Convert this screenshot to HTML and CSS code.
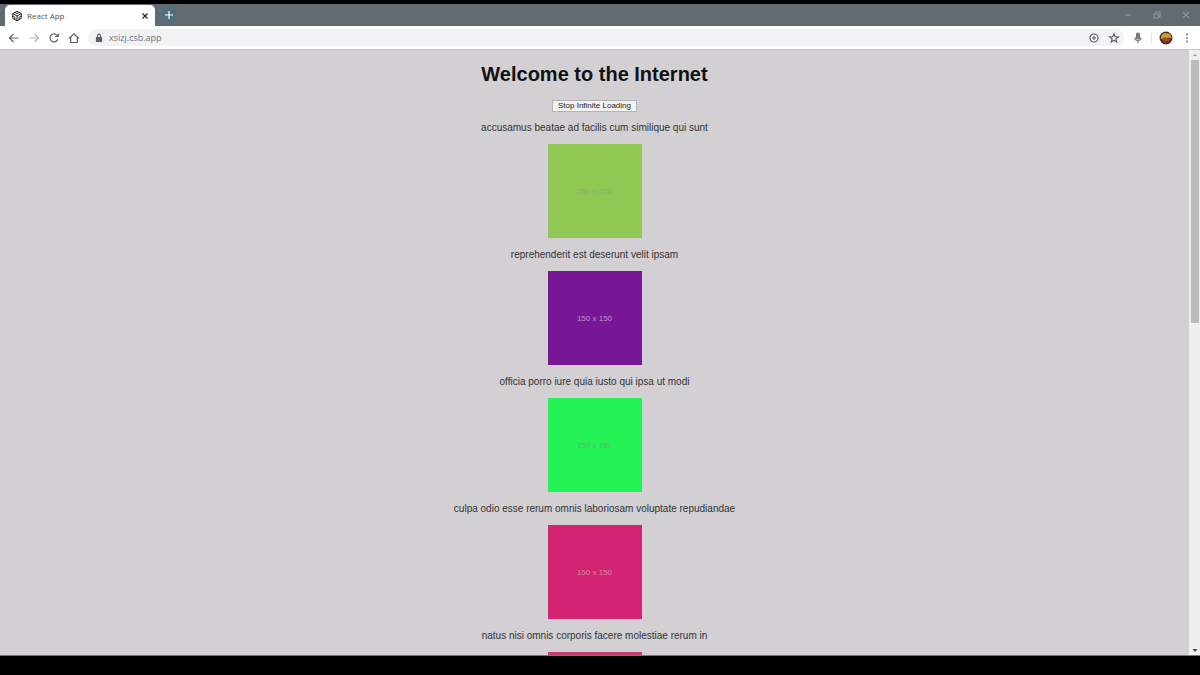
FILE: index.html
```html
<!DOCTYPE html>
<html lang="en">
<head>
<meta charset="utf-8">
<title>React App</title>
<link rel="stylesheet" href="styles.css">
</head>
<body>
<div class="browser">
  <header class="tabbar">
    <div class="tab">
      <svg class="icon favicon" viewBox="0 0 24 24"><path d="M12 2.500 20.500 7.200v9.600L12 21.500l-8.500-4.700V7.200zM3.500 7.200 12 12l8.500-4.800M12 12v9.500M7.700 4.900 12 7.300l4.300-2.400M3.500 12l4.300 2.400v4.800M20.500 12l-4.300 2.400v4.800"/></svg>
      <span class="tab-title">React App</span>
      <button class="icon-button" aria-label="Close tab"><svg class="icon close" viewBox="0 0 12 12"><path d="M3.500 3.500l5 5M8.500 3.500l-5 5"/></svg></button>
    </div>
    <button class="icon-button new-tab" aria-label="New tab"><svg class="icon" viewBox="0 0 10 10"><path d="M5 1v8M1 5h8"/></svg></button>
    <div class="window-controls">
      <button class="icon-button" aria-label="Minimize"><svg class="icon" viewBox="0 0 10 10"><path d="M2 5h6"/></svg></button>
      <button class="icon-button" aria-label="Restore"><svg class="icon" viewBox="0 0 10 10"><path d="M2 4h4.500v4H2zM3.500 4V2h4.500v4.500H6.500"/></svg></button>
      <button class="icon-button" aria-label="Close window"><svg class="icon" viewBox="0 0 10 10"><path d="M2 2l6 6M8 2 2 8"/></svg></button>
    </div>
  </header>
  <nav class="toolbar">
    <button class="icon-button" aria-label="Back"><svg class="icon" viewBox="0 0 12 12"><path d="M10.500 6h-9M5.500 2l-4 4 4 4"/></svg></button>
    <button class="icon-button forward" aria-label="Forward"><svg class="icon" viewBox="0 0 12 12"><path d="M1.500 6h9M6.500 2l4 4-4 4"/></svg></button>
    <button class="icon-button" aria-label="Reload"><svg class="icon" viewBox="0 0 12 12"><path d="M9.800 7.200A4 4 0 1 1 9 3.300L10 4.400M10.200 1.500v3H7.200"/></svg></button>
    <button class="icon-button" aria-label="Home"><svg class="icon" viewBox="0 0 12 12"><path d="M1 6.500 6 1.800l5 4.700M2.700 5.500v5h6.600v-5"/></svg></button>
    <div class="address">
      <svg class="icon lock" viewBox="0 0 8 10"><path class="solid" d="M1.500 4.500h5v4h-5z"/><path d="M2.500 4V2.700a1.500 1.500 0 0 1 3 0V4"/></svg>
      <input class="url" type="text" aria-label="Address" value="xsizj.csb.app">
      <button class="icon-button" aria-label="Zoom"><svg class="icon" viewBox="0 0 12 12"><circle cx="6" cy="6" r="4"/><path d="M4 6h4M6 4v4"/></svg></button>
      <button class="icon-button" aria-label="Bookmark"><svg class="icon" viewBox="0 0 12 12"><path d="m6 1.800 1.200 2.900 3.100.2-2.400 2 .8 3L6 8.300 3.300 9.900l.8-3-2.400-2 3.100-.2z"/></svg></button>
    </div>
    <div class="extensions">
      <button class="icon-button" aria-label="Microphone"><svg class="icon mic" viewBox="0 0 12 12"><path class="solid" d="M4.500 2.500a1.500 1.500 0 0 1 3 0v3a1.500 1.500 0 0 1-3 0z"/><path d="M3 5.500c0 4 6 4 6 0M6 8.500v2.500"/></svg></button>
      <span class="divider"></span>
      <button class="icon-button" aria-label="Profile"><svg class="avatar" viewBox="0 0 14 14"><circle cx="7" cy="7" r="6.500" fill="#4b2a25"/><path fill="#cf9c25" d="M2 5l3-3 5 .500 3 4-2 1-2-1-3 2-4-.500z"/><path fill="#a34820" d="M3 8l3-2 2 2 3-1-1 4-2-1-2 2z"/><path fill="#7b9b36" d="M10 2l2 2v2l-2-2z"/></svg></button>
    </div>
    <button class="icon-button" aria-label="Menu"><svg class="icon" viewBox="0 0 12 12"><circle class="solid" cx="6" cy="2.500" r=".3"/><circle class="solid" cx="6" cy="6" r=".3"/><circle class="solid" cx="6" cy="9.500" r=".3"/></svg></button>
  </nav>
  <div class="viewport">
    <main class="page">
      <h1 class="title">Welcome to the Internet</h1>
      <button class="stop">Stop Infinite Loading</button>
      <section class="feed">
        <article class="item"><p class="caption">accusamus beatae ad facilis cum similique qui sunt</p><div class="photo green">150 x 150</div></article>
        <article class="item"><p class="caption">reprehenderit est deserunt velit ipsam</p><div class="photo purple">150 x 150</div></article>
        <article class="item"><p class="caption">officia porro iure quia iusto qui ipsa ut modi</p><div class="photo lime">150 x 150</div></article>
        <article class="item"><p class="caption">culpa odio esse rerum omnis laboriosam voluptate repudiandae</p><div class="photo pink">150 x 150</div></article>
        <article class="item"><p class="caption">natus nisi omnis corporis facere molestiae rerum in</p><div class="photo rose"></div></article>
      </section>
    </main>
    <div class="scrollbar">
      <svg class="arrow" viewBox="0 0 10 10"><path d="M3 6l2-2 2 2z"/></svg>
      <div class="track"><div class="thumb"></div></div>
      <svg class="arrow dark" viewBox="0 0 10 10"><path d="M2.500 4h5L5 7z"/></svg>
    </div>
  </div>
</div>
</body>
</html>
```
FILE: styles.css
```css
* {
  box-sizing: border-box;
}

body {
  margin: 0;
  background: #000;
  font-family: "Liberation Sans", Arial, sans-serif;
}

.browser {
  display: flex;
  flex-direction: column;
  height: 100vh;
  padding: 4px 0 19px;
}

.icon-button {
  display: flex;
  align-items: center;
  justify-content: center;
  flex: none;
  padding: 0;
  border: 0;
  background: none;
  color: inherit;
}

.icon {
  display: block;
  width: 12px;
  height: 12px;
  fill: none;
  stroke: currentColor;
  stroke-width: 1.2;
}

.solid {
  fill: currentColor;
}

.tabbar {
  display: flex;
  align-items: stretch;
  flex: none;
  height: 22px;
  background: #636b70;
}

.tab {
  display: flex;
  align-items: center;
  gap: 4px;
  width: 150px;
  margin: 1px 0 0 5px;
  padding: 0 4px 0 6px;
  border-radius: 5px 5px 0 0;
  background: #fff;
  color: #555;
}

.favicon {
  stroke-width: 2;
  color: #222;
}

.tab-title {
  flex: 1;
  font: 8px "Open Sans", sans-serif;
}

.close {
  color: #222;
}

.new-tab {
  align-self: center;
  width: 18px;
  height: 18px;
  margin-left: 5px;
  border-radius: 50%;
  background: #50717b;
  color: #fff;
}

.new-tab .icon {
  width: 10px;
  height: 10px;
}

.window-controls {
  display: flex;
  gap: 19px;
  margin-left: auto;
  padding-right: 9px;
  color: #8d9497;
}

.window-controls .icon {
  width: 10px;
  height: 10px;
}

.toolbar {
  display: flex;
  align-items: center;
  gap: 8px;
  flex: none;
  height: 23px;
  padding: 0 7px 0 8px;
  background: #fff;
  color: #5c6065;
}

.forward {
  color: #b4b6b8;
}

.address {
  display: flex;
  align-items: center;
  gap: 8px;
  flex: 1;
  height: 17px;
  padding: 0 4px 0 7px;
  border-radius: 9px;
  background: #f1f2f4;
}

.lock {
  width: 8px;
  height: 10px;
}

.url {
  flex: 1;
  min-width: 0;
  margin-left: -2px;
  padding: 0;
  border: 0;
  background: none;
  color: #70747a;
  font: 9px "Open Sans", sans-serif;
}

.extensions {
  display: flex;
  align-items: center;
  gap: 7px;
}

.mic {
  color: #777;
}

.divider {
  width: 1px;
  height: 10px;
  background: #e4e4e4;
}

.avatar {
  display: block;
  width: 14px;
  height: 14px;
}

.viewport {
  display: flex;
  flex: 1;
  min-height: 0;
  border-top: 1px solid #c6c5c8;
  border-bottom: 1px solid #777;
}

.page {
  display: flex;
  flex-direction: column;
  align-items: center;
  flex: 1;
  padding-top: 12px;
  overflow: hidden;
  background: #d2d0d3;
}

.title {
  flex: none;
  margin: 0 0 14px;
  color: #111;
  font-size: 20px;
  line-height: 24px;
}

.stop {
  flex: none;
  height: 12px;
  margin-bottom: 10px;
  padding: 0 5px;
  border: 1px solid #b4b4b4;
  background: #f3f3f3;
  color: #222;
  font: 8px/10px "Liberation Sans", Arial, sans-serif;
}

.feed {
  display: flex;
  flex-direction: column;
  gap: 11px;
}

.item {
  display: flex;
  flex-direction: column;
  align-items: center;
  gap: 10px;
}

.caption {
  margin: 0;
  color: #333;
  font-size: 10px;
  line-height: 12px;
}

.photo {
  display: flex;
  align-items: center;
  justify-content: center;
  width: 94px;
  height: 94px;
  font-size: 8px;
}

.green {
  background: #91c853;
  color: #9ca47e;
}

.purple {
  background: #771796;
  color: #c095ca;
}

.lime {
  background: #24f355;
  color: #66b070;
}

.pink {
  background: #d32473;
  color: #d984a8;
}

.rose {
  background: #c63d74;
}

.scrollbar {
  display: flex;
  flex-direction: column;
  align-items: center;
  flex: none;
  width: 11px;
  background: #f0eff0;
}

.arrow {
  width: 10px;
  height: 10px;
  fill: #999;
}

.dark {
  fill: #444;
}

.track {
  flex: 1;
  width: 8px;
}

.thumb {
  height: 45%;
  background: #bcbcbd;
}
```
